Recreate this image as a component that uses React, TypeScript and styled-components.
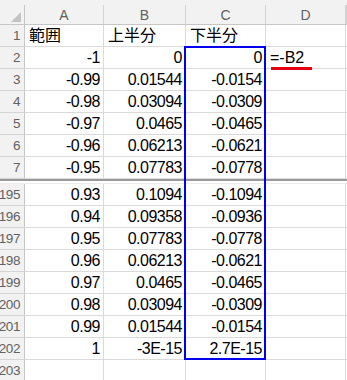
import React from 'react';
import styled, { createGlobalStyle } from 'styled-components';

const GlobalStyle = createGlobalStyle`
  html, body {
    margin: 0;
    padding: 0;
    background: #ffffff;
    overflow: hidden;
  }
`;

const COLS = [
  { key: 'A', width: 79 },
  { key: 'B', width: 82 },
  { key: 'C', width: 80 },
  { key: 'D', width: 80 },
];
const ROW_HEAD = 25;
const ROW_H = 22;

const Sheet = styled.div`
  position: relative;
  width: 347px;
  height: 380px;
  overflow: hidden;
  font-family: 'Liberation Sans', 'Noto Sans CJK JP', sans-serif;
`;

const HeaderRow = styled.div`
  display: flex;
  height: 25px;
  padding-top: 5px;
  box-sizing: border-box;
  background: #f2f2f2;
  border-bottom: 1px solid #c6c6c6;
`;

const Corner = styled.div`
  width: ${ROW_HEAD}px;
  flex: none;
  box-sizing: border-box;
  border-right: 1px solid #c6c6c6;
  display: flex;
  align-items: flex-end;
  justify-content: flex-end;
  padding: 0 3px 2px 0;
`;

const ColHead = styled.div<{ $w?: number }>`
  width: ${p => (p.$w ? `${p.$w}px` : 'auto')};
  flex: ${p => (p.$w ? 'none' : '1')};
  box-sizing: border-box;
  border-right: 1px solid #d4d4d4;
  display: flex;
  align-items: center;
  justify-content: center;
  font-size: 14px;
  color: #616161;
`;

const Row = styled.div`
  display: flex;
  height: ${ROW_H}px;
`;

const RowHead = styled.div`
  width: ${ROW_HEAD}px;
  flex: none;
  box-sizing: border-box;
  background: #f2f2f2;
  border-right: 1px solid #c6c6c6;
  border-bottom: 1px solid #d4d4d4;
  display: flex;
  align-items: center;
  justify-content: flex-end;
  padding-right: 4px;
  font-size: 13.5px;
  letter-spacing: -0.4px;
  color: #616161;
`;

const Cell = styled.div<{ $w?: number; $text?: boolean }>`
  width: ${p => (p.$w ? `${p.$w}px` : 'auto')};
  flex: ${p => (p.$w ? 'none' : '1')};
  box-sizing: border-box;
  border-right: 1px solid #dadada;
  border-bottom: 1px solid #dadada;
  display: flex;
  align-items: flex-end;
  justify-content: ${p => (p.$text ? 'flex-start' : 'flex-end')};
  padding: 0 3px 1px 4px;
  font-size: 16px;
  line-height: 18px;
  letter-spacing: ${p => (p.$text ? '0' : '-0.5px')};
  color: #000000;
  white-space: nowrap;
  overflow: visible;
  position: relative;
`;

const Formula = styled.span`
  position: relative;
  &::after {
    content: '';
    position: absolute;
    left: 1px;
    right: -8px;
    bottom: -3px;
    height: 3px;
    background: #e60012;
  }
`;

const FreezeBar = styled.div`
  height: 2px;
  background: #9a9a9a;
`;

const FreezeGap = styled.div`
  height: 2px;
  background: #ffffff;
  border-bottom: 1px solid #ececec;
`;

const Selection = styled.div`
  position: absolute;
  left: 184px;
  top: 46px;
  width: 82px;
  height: 314px;
  box-sizing: border-box;
  border: 2px solid #0000ee;
  pointer-events: none;
`;

type RowData = { n: number; cells: string[] };

const topRows: RowData[] = [
  { n: 1, cells: ['範囲', '上半分', '下半分', ''] },
  { n: 2, cells: ['-1', '0', '0', '=-B2'] },
  { n: 3, cells: ['-0.99', '0.01544', '-0.0154', ''] },
  { n: 4, cells: ['-0.98', '0.03094', '-0.0309', ''] },
  { n: 5, cells: ['-0.97', '0.0465', '-0.0465', ''] },
  { n: 6, cells: ['-0.96', '0.06213', '-0.0621', ''] },
  { n: 7, cells: ['-0.95', '0.07783', '-0.0778', ''] },
];

const bottomRows: RowData[] = [
  { n: 195, cells: ['0.93', '0.1094', '-0.1094', ''] },
  { n: 196, cells: ['0.94', '0.09358', '-0.0936', ''] },
  { n: 197, cells: ['0.95', '0.07783', '-0.0778', ''] },
  { n: 198, cells: ['0.96', '0.06213', '-0.0621', ''] },
  { n: 199, cells: ['0.97', '0.0465', '-0.0465', ''] },
  { n: 200, cells: ['0.98', '0.03094', '-0.0309', ''] },
  { n: 201, cells: ['0.99', '0.01544', '-0.0154', ''] },
  { n: 202, cells: ['1', '-3E-15', '2.7E-15', ''] },
  { n: 203, cells: ['', '', '', ''] },
];

function SheetRow({ row }: { row: RowData }) {
  return (
    <Row>
      <RowHead>{row.n}</RowHead>
      {row.cells.map((c, i) => {
        const isText = row.n === 1 || c.startsWith('=');
        return (
          <Cell key={i} $w={COLS[i].width} $text={isText}>
            {c.startsWith('=') ? <Formula>{c}</Formula> : c}
          </Cell>
        );
      })}
      <Cell />
    </Row>
  );
}

export default function App() {
  return (
    <>
      <GlobalStyle />
      <Sheet>
        <HeaderRow>
          <Corner>
            <svg width="10" height="10" viewBox="0 0 10 10">
              <polygon points="10,0 10,10 0,10" fill="#c3c3c3" />
            </svg>
          </Corner>
          {COLS.map(c => (
            <ColHead key={c.key} $w={c.width}>{c.key}</ColHead>
          ))}
          <ColHead />
        </HeaderRow>
        {topRows.map(r => <SheetRow key={r.n} row={r} />)}
        <FreezeBar />
        <FreezeGap />
        {bottomRows.map(r => <SheetRow key={r.n} row={r} />)}
        <Selection />
      </Sheet>
    </>
  );
}
